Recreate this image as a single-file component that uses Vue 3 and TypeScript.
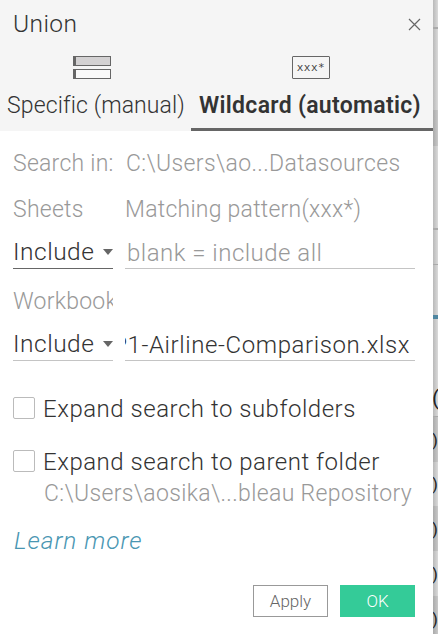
<template>
  <div class="stage">
    <section class="dialog">
      <header class="header">
        <div class="title-row">
          <h1 class="title">Union</h1>
          <button class="close" aria-label="Close">
            <svg width="13" height="13" viewBox="0 0 13 13">
              <path d="M1 1 L12 12 M12 1 L1 12" stroke="#666" stroke-width="1.2" fill="none" />
            </svg>
          </button>
        </div>

        <nav class="tabs">
          <button class="tab manual" :class="{ active: mode === 'manual' }" @click="mode = 'manual'">
            <svg class="tab-icon" width="38" height="23" viewBox="0 0 38 23">
              <rect x="0.5" y="0.5" width="37" height="9" fill="#d3d1d2" stroke="#666" />
              <rect x="0.5" y="13.5" width="37" height="9" fill="#fafafa" stroke="#666" />
              <path d="M0 0H3V10H0Z M0 13H3V23H0Z" fill="#666" />
            </svg>
            <span class="tab-label">Specific (manual)</span>
          </button>
          <button class="tab wildcard" :class="{ active: mode === 'wildcard' }" @click="mode = 'wildcard'">
            <span class="tab-icon pattern-icon">xxx*</span>
            <span class="tab-label">Wildcard (automatic)</span>
          </button>
        </nav>
      </header>

      <div class="body">
        <div class="row search">
          <span class="label in">Search in:</span>
          <span class="label path">C:\Users\ao...Datasources</span>
        </div>

        <div class="row captions">
          <span class="label">Sheets</span>
          <span class="label pattern">Matching pattern(xxx*)</span>
        </div>
        <div class="row fields">
          <div class="select focused">
            <span>Include</span>
            <i class="caret"></i>
          </div>
          <div class="field placeholder"><span>blank = include all</span></div>
        </div>

        <div class="row captions workbook">
          <span class="label">Workbooks</span>
        </div>
        <div class="row fields">
          <div class="select">
            <span>Include</span>
            <i class="caret"></i>
          </div>
          <!-- long value is scrolled to its end -->
          <div class="field scrolled"><span>P1-Airline-Comparison.xlsx</span></div>
        </div>

        <label class="check" @click="subfolders = !subfolders">
          <span class="box" :class="{ checked: subfolders }"></span>
          <span class="check-text">Expand search to subfolders</span>
        </label>
        <label class="check second" @click="parentFolder = !parentFolder">
          <span class="box" :class="{ checked: parentFolder }"></span>
          <span class="check-text">Expand search to parent folder</span>
        </label>
        <div class="parent-path">C:\Users\aosika\...bleau Repository</div>

        <a class="learn">Learn more</a>

        <footer class="actions">
          <button class="btn">Apply</button>
          <button class="btn primary">OK</button>
        </footer>
      </div>
    </section>

    <aside class="behind">
      <div v-for="(cell, i) in cells" :key="i" class="cell" :class="cell.kind" :style="{ height: cell.height + 'px' }">
        <span v-if="cell.text">{{ cell.text }}</span>
      </div>
    </aside>
  </div>
</template>

<script setup lang="ts">
import { ref } from 'vue';

interface Cell {
  height: number;
  kind: string;
  text?: string;
}

const mode = ref<'manual' | 'wildcard'>('wildcard');
const subfolders = ref(false);
const parentFolder = ref(false);

// Slice of the data grid visible past the dialog edge
const cells: Cell[] = [
  { height: 29, kind: 'plain line' },
  { height: 81, kind: 'plain' },
  { height: 36, kind: 'dark' },
  { height: 84, kind: 'plain line' },
  { height: 35, kind: 'plain line thin' },
  { height: 50, kind: 'plain' },
  { height: 4, kind: 'blue' },
  { height: 98, kind: 'plain line thin head', text: '(' },
  { height: 45, kind: 'dark', text: ')' },
  { height: 44, kind: 'plain', text: ')' },
  { height: 45, kind: 'dark', text: ')' },
  { height: 45, kind: 'plain', text: ')' },
  { height: 45, kind: 'dark', text: ')' },
];
</script>

<style>
body {
  margin: 0;
  background: #fff;
}
</style>

<style scoped>
.stage {
  display: flex;
  width: 438px;
  height: 634px;
  overflow: hidden;
  font-family: Roboto, "Liberation Sans", sans-serif;
  font-weight: 300;
  font-size: 23px;
  color: #333;
  white-space: nowrap;
}

button {
  border: 0;
  padding: 0;
  background: transparent;
  font: inherit;
  color: inherit;
}

.dialog {
  flex: none;
  width: 433px;
  background: #fff;
}

.header {
  box-sizing: border-box;
  height: 131px;
  padding-top: 9px;
  background: #f5f5f5;
}

.title-row {
  display: flex;
  justify-content: space-between;
  align-items: center;
  height: 30px;
  padding: 0 12px 0 13px;
}

.title {
  margin: 0;
  font-size: 24.5px;
  font-weight: 300;
  line-height: 30px;
  letter-spacing: 0.4px;
}

.close {
  display: flex;
}

.tabs {
  display: flex;
  height: 92px;
}

.tab {
  box-sizing: border-box;
  display: flex;
  flex-direction: column;
  align-items: center;
  padding-top: 17px;
  border-bottom: 3px solid transparent;
}

.tab.manual {
  width: 191px;
  padding-right: 7px;
  letter-spacing: 0.12px;
}

.tab.manual .tab-label {
  margin-left: 8px;
}

.tab.wildcard {
  width: 242px;
  padding-right: 2px;
  letter-spacing: 0.3px;
}

.tab.wildcard .tab-label {
  margin-left: -2px;
}

.tab.active {
  border-color: #666;
  font-weight: 600;
}

.tab-icon {
  flex: none;
  display: block;
}

.pattern-icon {
  box-sizing: border-box;
  width: 38px;
  height: 23px;
  border: 1px solid #666;
  border-radius: 1px;
  font: 11px/22px "DejaVu Sans Mono", monospace;
  letter-spacing: 0.5px;
  color: #444;
}

.tab-label {
  margin-top: 13px;
  line-height: 28px;
}

.body {
  padding: 17px 18px 0 13px;
}

.row {
  display: grid;
  grid-template-columns: 100px 290px;
  column-gap: 12px;
  height: 32px;
  line-height: 32px;
}

.label {
  overflow: hidden;
  letter-spacing: 0.25px;
  color: #999;
}

.label.path {
  padding-left: 1px;
  letter-spacing: 0.38px;
}

.captions {
  margin-top: 14px;
}

.captions.workbook {
  margin-top: 17px;
}

.fields {
  height: 33px;
  margin-top: 10px;
  font-size: 24.5px;
  letter-spacing: 0.5px;
}

.select,
.field {
  box-sizing: border-box;
  height: 33px;
  border-bottom: 1px solid #c4c4c4;
  overflow: hidden;
}

.select {
  display: flex;
  justify-content: space-between;
  align-items: center;
}

.select.focused {
  border-color: #666;
}

.caret {
  border: 5px solid transparent;
  border-top: 6px solid #666;
  border-bottom: 0;
}

.field.placeholder {
  padding-left: 2px;
  font-size: 24px;
  line-height: 34px;
  letter-spacing: 0.48px;
  color: #999;
}

.field.scrolled {
  display: flex;
  justify-content: flex-end;
  padding-right: 5px;
  font-size: 24px;
  line-height: 34px;
  letter-spacing: 0.6px;
}

.check {
  display: flex;
  align-items: center;
  height: 22px;
  margin-top: 36px;
}

.check.second {
  margin-top: 31px;
}

.box {
  box-sizing: border-box;
  width: 22px;
  height: 22px;
  margin-right: 8px;
  border: 1px solid #bbb;
  border-radius: 2px;
}

.box.checked {
  background: #666;
}

.check-text {
  padding-top: 1px;
  font-size: 24px;
  letter-spacing: 0.52px;
}

.parent-path {
  margin: 6px 0 0 31px;
  line-height: 32px;
  letter-spacing: 0.36px;
  color: #999;
}

.learn {
  display: block;
  width: max-content;
  margin: 15px 0 0 1px;
  font-size: 24.5px;
  line-height: 32px;
  letter-spacing: 0.95px;
  font-style: italic;
  color: #4996b2;
}

.actions {
  display: flex;
  justify-content: flex-end;
  gap: 12px;
  margin-top: 28px;
}

.btn {
  box-sizing: border-box;
  width: 75px;
  height: 32px;
  border: 1px solid #999;
  font-size: 17px;
  line-height: 29px;
  color: #666;
}

.btn.primary {
  border-color: #34cb98;
  background: #34cb98;
  color: #fff;
}

.behind {
  flex: none;
  width: 5px;
  background: linear-gradient(90deg, #b9b9b9, #dadada);
}

.cell {
  box-sizing: border-box;
  display: flex;
  align-items: center;
  overflow: hidden;
  font-size: 17px;
  font-weight: 400;
  color: #222;
}

.cell span {
  margin-left: -1px;
}

.cell.dark {
  background: rgba(0, 0, 0, 0.08);
}

.cell.line {
  border-bottom: 2px solid #aaa;
}

.cell.thin {
  border-bottom-width: 1px;
}

.cell.blue {
  background: #4f86a0;
}

.cell.head {
  align-items: flex-end;
  padding-bottom: 6px;
  font-size: 21px;
}
</style>
